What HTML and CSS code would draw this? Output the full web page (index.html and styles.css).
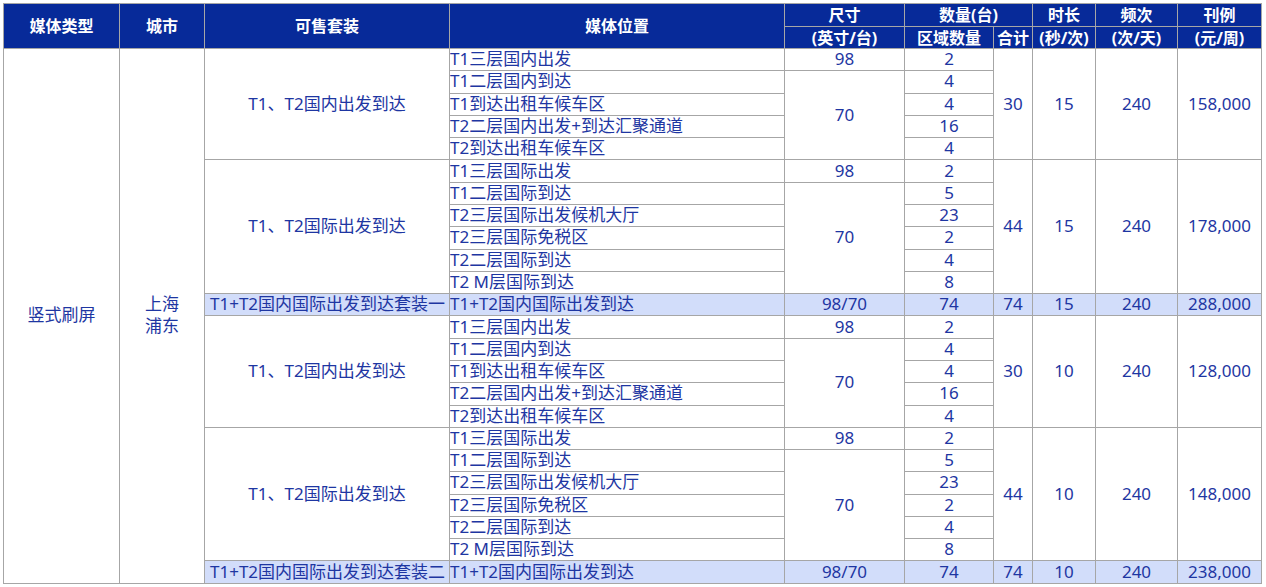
FILE: index.html
```html
<!DOCTYPE html>
<html lang="zh-CN">
<head>
<meta charset="utf-8">
<title>媒体刊例</title>
<link rel="stylesheet" href="styles.css">
</head>
<body>
<table class="rate">
  <colgroup>
    <col class="c-type"><col class="c-city"><col class="c-pkg"><col class="c-pos"><col class="c-size"><col class="c-area"><col class="c-sum"><col class="c-dur"><col class="c-freq"><col class="c-price">
  </colgroup>
  <thead>
    <tr class="h1">
      <th rowspan="2">媒体类型</th>
      <th rowspan="2">城市</th>
      <th rowspan="2">可售套装</th>
      <th rowspan="2">媒体位置</th>
      <th>尺寸</th>
      <th colspan="2">数量(台)</th>
      <th>时长</th>
      <th>频次</th>
      <th>刊例</th>
    </tr>
    <tr class="h2">
      <th>(英寸/台)</th>
      <th>区域数量</th>
      <th>合计</th>
      <th>(秒/次)</th>
      <th>(次/天)</th>
      <th>(元/周)</th>
    </tr>
  </thead>
  <tbody>
    <!-- group 1 -->
    <tr>
      <td rowspan="24" class="tall">竖式刷屏</td>
      <td rowspan="24" class="tall">上海<br>浦东</td>
      <td rowspan="5">T1、T2国内出发到达</td>
      <td class="pos">T1三层国内出发</td>
      <td>98</td>
      <td>2</td>
      <td rowspan="5">30</td>
      <td rowspan="5">15</td>
      <td rowspan="5">240</td>
      <td rowspan="5">158,000</td>
    </tr>
    <tr><td class="pos">T1二层国内到达</td><td rowspan="4">70</td><td>4</td></tr>
    <tr><td class="pos">T1到达出租车候车区</td><td>4</td></tr>
    <tr><td class="pos">T2二层国内出发+到达汇聚通道</td><td>16</td></tr>
    <tr><td class="pos">T2到达出租车候车区</td><td>4</td></tr>
    <!-- group 2 -->
    <tr>
      <td rowspan="6">T1、T2国际出发到达</td>
      <td class="pos">T1三层国际出发</td>
      <td>98</td>
      <td>2</td>
      <td rowspan="6">44</td>
      <td rowspan="6">15</td>
      <td rowspan="6">240</td>
      <td rowspan="6">178,000</td>
    </tr>
    <tr><td class="pos">T1二层国际到达</td><td rowspan="5">70</td><td>5</td></tr>
    <tr><td class="pos">T2三层国际出发候机大厅</td><td>23</td></tr>
    <tr><td class="pos">T2三层国际免税区</td><td>2</td></tr>
    <tr><td class="pos">T2二层国际到达</td><td>4</td></tr>
    <tr><td class="pos">T2 M层国际到达</td><td>8</td></tr>
    <!-- package 1 -->
    <tr class="hl">
      <td class="pkg">T1+T2国内国际出发到达套装一</td>
      <td class="pos">T1+T2国内国际出发到达</td>
      <td>98/70</td>
      <td>74</td>
      <td>74</td>
      <td>15</td>
      <td>240</td>
      <td>288,000</td>
    </tr>
    <!-- group 3 -->
    <tr>
      <td rowspan="5">T1、T2国内出发到达</td>
      <td class="pos">T1三层国内出发</td>
      <td>98</td>
      <td>2</td>
      <td rowspan="5">30</td>
      <td rowspan="5">10</td>
      <td rowspan="5">240</td>
      <td rowspan="5">128,000</td>
    </tr>
    <tr><td class="pos">T1二层国内到达</td><td rowspan="4">70</td><td>4</td></tr>
    <tr><td class="pos">T1到达出租车候车区</td><td>4</td></tr>
    <tr><td class="pos">T2二层国内出发+到达汇聚通道</td><td>16</td></tr>
    <tr><td class="pos">T2到达出租车候车区</td><td>4</td></tr>
    <!-- group 4 -->
    <tr>
      <td rowspan="6">T1、T2国际出发到达</td>
      <td class="pos">T1三层国际出发</td>
      <td>98</td>
      <td>2</td>
      <td rowspan="6">44</td>
      <td rowspan="6">10</td>
      <td rowspan="6">240</td>
      <td rowspan="6">148,000</td>
    </tr>
    <tr><td class="pos">T1二层国际到达</td><td rowspan="5">70</td><td>5</td></tr>
    <tr><td class="pos">T2三层国际出发候机大厅</td><td>23</td></tr>
    <tr><td class="pos">T2三层国际免税区</td><td>2</td></tr>
    <tr><td class="pos">T2二层国际到达</td><td>4</td></tr>
    <tr><td class="pos">T2 M层国际到达</td><td>8</td></tr>
    <!-- package 2 -->
    <tr class="hl">
      <td class="pkg">T1+T2国内国际出发到达套装二</td>
      <td class="pos">T1+T2国内国际出发到达</td>
      <td>98/70</td>
      <td>74</td>
      <td>74</td>
      <td>10</td>
      <td>240</td>
      <td>238,000</td>
    </tr>
  </tbody>
</table>
</body>
</html>
```

FILE: styles.css
```css
html, body {
  margin: 0;
  padding: 0;
  background: #ffffff;
}

body {
  padding: 3px 0 0 3px;
  font-family: "Noto Sans", "Noto Sans CJK SC", sans-serif;
}

.rate {
  border-collapse: collapse;
  table-layout: fixed;
  width: 1259px;
  color: #1e36a2;
  font-size: 17px;
}

.c-type  { width: 116px; }
.c-city  { width: 85px; }
.c-pkg   { width: 245px; }
.c-pos   { width: 335px; }
.c-size  { width: 120px; }
.c-area  { width: 89px; }
.c-sum   { width: 39px; }
.c-dur   { width: 63px; }
.c-freq  { width: 82px; }
.c-price { width: 84px; }

.rate th,
.rate td {
  border: 1px solid #a6a6a6;
  padding: 0;
  text-align: center;
  vertical-align: middle;
  white-space: nowrap;
  overflow: hidden;
}

.rate th {
  background: #072a99;
  color: #ffffff;
  font-size: 16px;
  font-weight: bold;
  line-height: 20px;
}

.rate .h1 { height: 23px; }
.rate .h2 { height: 22px; }

.rate td {
  line-height: 19px;
  padding-bottom: 2px;
}

.rate td.tall {
  line-height: 21.5px;
}

.rate tbody tr {
  height: 22.29px;
}

.rate td.pos {
  text-align: left;
}

.rate tr.hl td {
  background: #d2ddfa;
}

.rate td.pkg {
  text-align: justify;
  text-align-last: justify;
  padding-left: 5px;
  padding-right: 5px;
}
```
